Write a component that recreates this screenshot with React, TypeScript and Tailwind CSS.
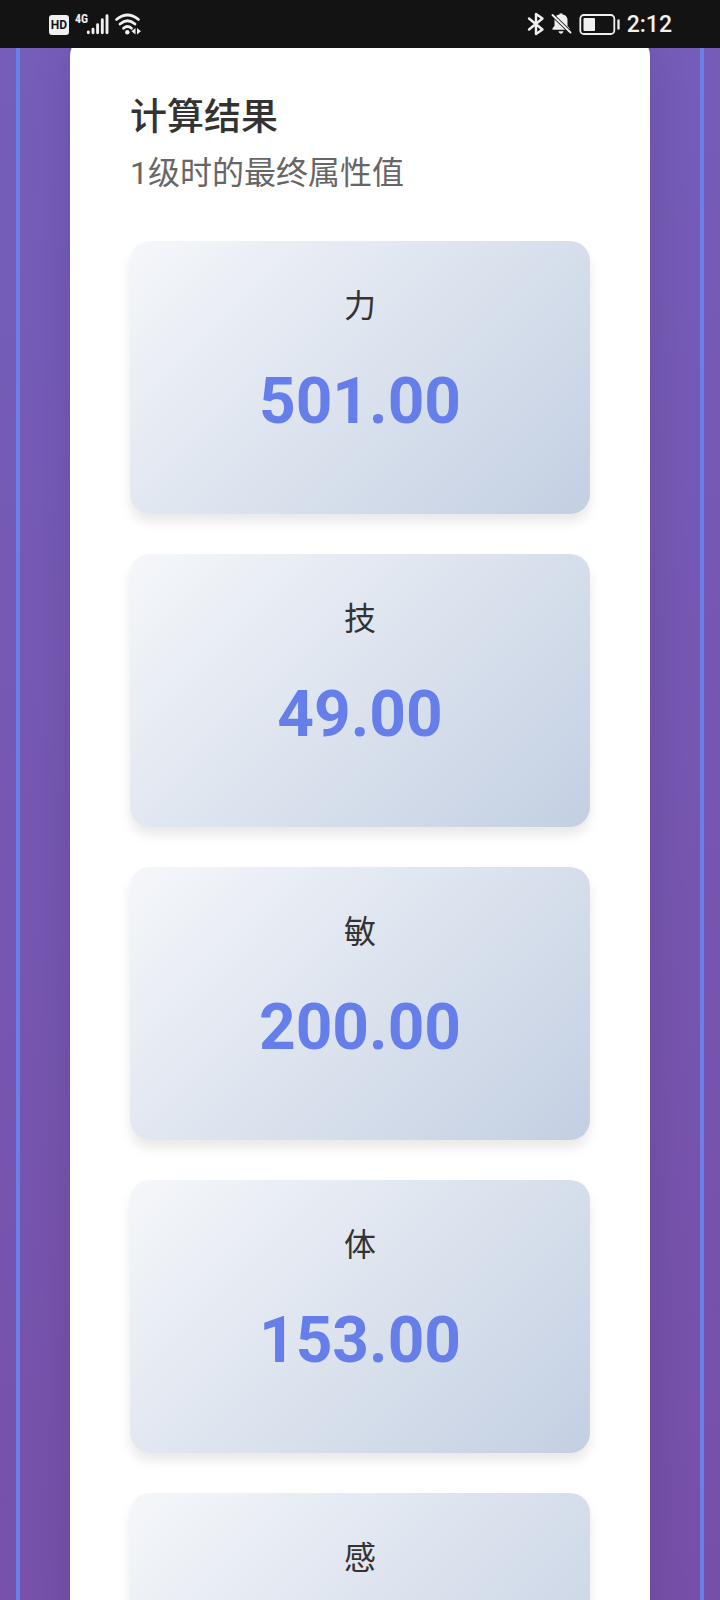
import React from "react";

type Stat = { label: string; value?: string };

const stats: Stat[] = [
  { label: "力", value: "501.00" },
  { label: "技", value: "49.00" },
  { label: "敏", value: "200.00" },
  { label: "体", value: "153.00" },
  { label: "感" },
];

function StatusBar() {
  return (
    <header className="relative z-10 flex h-12 shrink-0 items-center justify-between bg-[#131313] px-12 text-[#f0f0f0]">
      <svg className="h-12 w-24" viewBox="0 0 96 48" role="img" aria-label="HD 4G Wi-Fi">
        <rect x="1" y="15" width="20" height="20" rx="3" fill="currentColor" />
        <text x="11" y="29" fill="#131313" fontSize="12" fontWeight="700" textAnchor="middle" className="font-['Roboto',sans-serif]">HD</text>
        <text x="27" y="23" fill="currentColor" fontSize="12" fontWeight="700" className="font-['Roboto_Condensed','Liberation_Sans_Narrow','Open_Sans_Condensed',sans-serif]">4G</text>
        <path d="M40.3 32.7v-.8M45 32.7v-3.5M49.6 32.7v-8M54.3 32.7v-13M59 32.7v-17" stroke="currentColor" strokeWidth="2.9" strokeLinecap="round" />
        <path d="M68.5 19.5Q79.5 10.5 90.5 19.5M72 24Q79.5 17.5 87 24M75.5 28.3Q79.5 24.7 83.5 28.3" fill="none" stroke="currentColor" strokeWidth="2.7" strokeLinecap="round" />
        <circle cx="79.3" cy="32.3" r="2.2" fill="currentColor" />
        <path d="M87.5 28v6.6l-4-3.3zM89 28v6.6l4-3.3z" fill="currentColor" />
      </svg>
      <div className="flex items-center">
        <svg className="h-12 w-24" viewBox="0 0 96 48" role="img" aria-label="蓝牙 静音 电池">
          <path d="M4 18.500 17.500 29.500 11 34V14L17.500 18.500 4 29.500" fill="none" stroke="currentColor" strokeWidth="2.4" strokeLinejoin="round" strokeLinecap="round" />
          <path d="M27.500 29.800v-1.500l2-2.300v-6c0-3.400 2.200-5.100 5-5.600V13.600h3v.8c2.800.5 5 2.200 5 5.600v6l2 2.300v1.500zM33.500 31.300h5c-.4 3.300-4.600 3.300-5 0z" fill="currentColor" />
          <path d="m26 13.500 20.500 20" stroke="#131313" strokeWidth="3.8" />
          <path d="m27.500 15 18 17.500" stroke="currentColor" strokeWidth="1.9" strokeLinecap="round" />
          <rect x="55.300" y="15" width="34" height="19" rx="3.5" fill="none" stroke="currentColor" strokeWidth="1.8" />
          <rect x="58.500" y="18" width="11.500" height="13" rx="1" fill="currentColor" />
          <path d="M93.500 19.500v10" stroke="currentColor" strokeWidth="2.3" />
        </svg>
        <time className="ml-1.5 pt-0.5 font-['Roboto',sans-serif] text-[23px] leading-8 font-medium">2:12</time>
      </div>
    </header>
  );
}

function StatCard({ label, value }: Stat) {
  return (
    <div className="h-[273px] rounded-[20px] bg-linear-135 from-[#f5f7fa] to-[#c3cfe2] px-10 pt-[41px] text-center shadow-[0_8px_12px_rgba(0,0,0,0.09)]">
      <dt className="text-[32px] leading-12 text-[#333]">{label}</dt>
      {value && (
        <dd className="mt-4 text-[64px] leading-[112px] font-bold text-[#667eea]">{value}</dd>
      )}
    </div>
  );
}

export default function App() {
  return (
    <div className="flex h-screen flex-col overflow-hidden font-['Roboto','Noto_Sans_CJK_SC',sans-serif]">
      <StatusBar />
      <main className="min-h-0 flex-1 overflow-hidden bg-linear-[165deg] from-[#745eba] to-[#774fa9] px-4">
        <div className="border-x-4 border-[#6a80e8] px-[50px]">
          <section className="-mt-3 rounded-[20px] bg-white px-[60px] pt-[54px] pb-16 shadow-[0_10px_40px_rgba(0,0,0,0.12)]">
            <h1 className="text-[37px] leading-14 font-medium text-[#333]">计算结果</h1>
            <p className="text-[32px] leading-[54px] text-[#666]">1级时的最终属性值</p>
            <dl className="mt-[41px] flex flex-col gap-10">
              {stats.map((stat) => (
                <StatCard key={stat.label} {...stat} />
              ))}
            </dl>
          </section>
        </div>
      </main>
    </div>
  );
}
